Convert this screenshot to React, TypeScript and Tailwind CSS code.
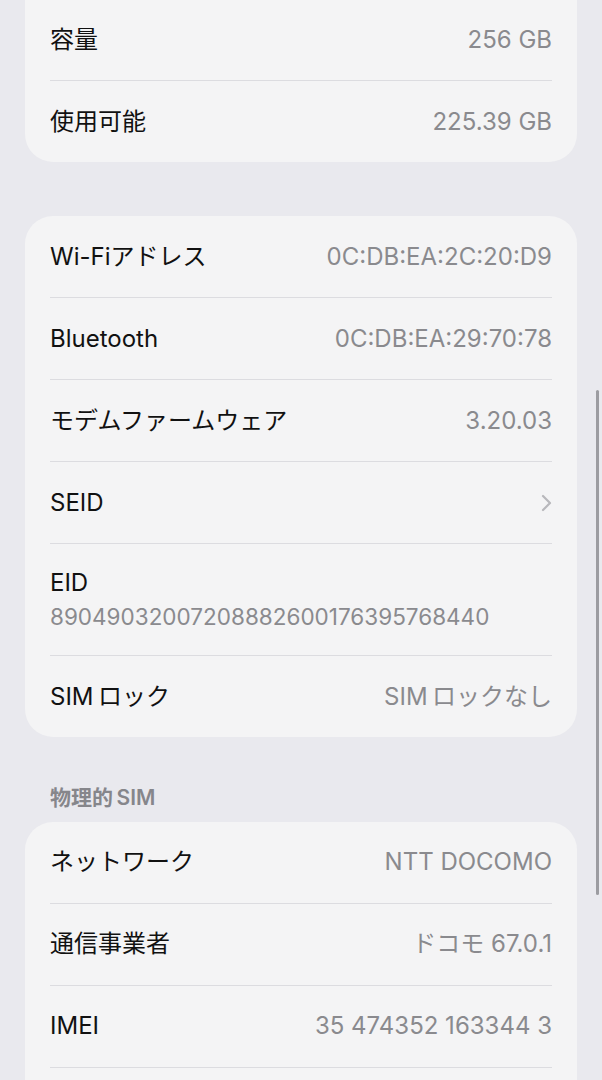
import React from 'react';

type Row = { label: string; value?: string; chevron?: boolean; sub?: string };

const storage: Row[] = [
  { label: '容量', value: '256 GB' },
  { label: '使用可能', value: '225.39 GB' },
];

const network: Row[] = [
  { label: 'Wi-Fiアドレス', value: '0C:DB:EA:2C:20:D9' },
  { label: 'Bluetooth', value: '0C:DB:EA:29:70:78' },
  { label: 'モデムファームウェア', value: '3.20.03' },
  { label: 'SEID', chevron: true },
  { label: 'EID', sub: '89049032007208882600176395768440' },
  { label: 'SIM\u2009ロック', value: 'SIM\u2009ロックなし' },
];

const sim: Row[] = [
  { label: 'ネットワーク', value: 'NTT DOCOMO' },
  { label: '通信事業者', value: 'ドコモ 67.0.1' },
  { label: 'IMEI', value: '35 474352 163344 3' },
];

const RowItem: React.FC<{ row: Row; last: boolean }> = ({ row, last }) => (
  <div className="pl-[25px]">
    {row.sub ? (
      <div className="flex flex-col justify-center h-[111px] pr-[25px]">
        <span className="text-[24px] text-[#111111] leading-[30px]">{row.label}</span>
        <span className="text-[22.5px] text-[#8a8a8e] leading-[28px] mt-[5px]">{row.sub}</span>
      </div>
    ) : (
      <div className="flex items-center justify-between h-[81px] pr-[25px]">
        <span className="text-[24px] text-[#111111]">{row.label}</span>
        {row.chevron ? (
          <svg width="12" height="18" viewBox="0 0 12 18" fill="none" stroke="#b8b8bc" strokeWidth="2.2" strokeLinecap="round" strokeLinejoin="round">
            <path d="M3 2l7 7-7 7" />
          </svg>
        ) : (
          <span className="text-[24px] text-[#8a8a8e]">{row.value}</span>
        )}
      </div>
    )}
    {!last && <div className="h-px bg-[#dcdce0] mr-[25px]" />}
  </div>
);

const Card: React.FC<{ rows: Row[]; className?: string; open?: boolean }> = ({ rows, className, open }) => (
  <div className={`mx-[25px] bg-[#f4f4f5] overflow-hidden ${className ?? ''}`}>
    {rows.map((r, i) => (
      <RowItem key={r.label} row={r} last={!open && i === rows.length - 1} />
    ))}
    {open && <div className="h-[40px]" />}
  </div>
);

export default function App() {
  return (
    <div
      className="relative w-[602px] h-[1080px] overflow-hidden bg-[#e9e9ee]"
      style={{ fontFamily: 'Inter, "Noto Sans CJK JP", sans-serif' }}
    >
      <div className="-mt-[1px]">
        <Card rows={storage} className="rounded-b-[28px]" />
      </div>
      <Card rows={network} className="rounded-[28px] mt-[54px]" />
      <div className="px-[50px] pt-[45px] pb-[8px] text-[21px] font-semibold text-[#86868b]">物理的&#8201;SIM</div>
      <Card rows={sim} className="rounded-t-[28px]" open />

      {/* scroll indicator */}
      <div className="absolute right-[3px] top-[390px] w-[3px] h-[505px] rounded-full bg-[#9c9ca1]" />
    </div>
  );
}
